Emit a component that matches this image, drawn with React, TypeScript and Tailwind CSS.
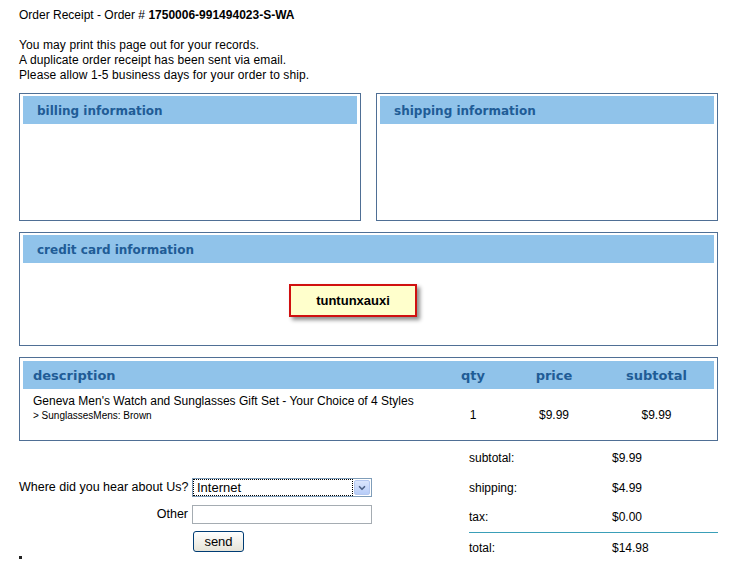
import { ChevronDown } from "lucide-react";

const headerText = "text-[12px] font-bold text-[#1f5c96] font-['DejaVu_Sans',sans-serif]";

function Panel({ title, className, children }: { title: string; className?: string; children?: React.ReactNode }) {
  return (
    <div className={`border border-[#4f6f95] p-[2px_3px_3px_3px] bg-white ${className ?? ""}`}>
      <div className="h-[28px] bg-[#90c3ea] flex items-center pl-[14px] pt-[2px]">
        <span className={headerText}>{title}</span>
      </div>
      {children}
    </div>
  );
}

export default function App() {
  return (
    <div className="min-h-screen bg-white font-['Liberation_Sans',Arial,sans-serif] text-[12px] leading-[15px] text-black">
      <div className="pl-[19px] pt-[8px] w-[718px]">
        {/* Title */}
        <p>
          Order Receipt - Order # <span className="font-bold">1750006-991494023-S-WA</span>
        </p>

        <div className="mt-[15px] tracking-[0.1px]">
          <p>You may print this page out for your records.</p>
          <p>A duplicate order receipt has been sent via email.</p>
          <p>Please allow 1-5 business days for your order to ship.</p>
        </div>

        {/* Billing / shipping */}
        <div className="mt-[10px] flex gap-[15px]">
          <Panel title="billing information" className="w-[342px] h-[128px]" />
          <Panel title="shipping information" className="w-[342px] h-[128px]" />
        </div>

        {/* Credit card */}
        <Panel title="credit card information" className="mt-[11px] h-[114px]">
          <div className="flex justify-center pr-[31px] pt-[21px]">
            <div className="w-[128px] h-[33px] border-2 border-[#d01010] bg-[#ffffcc] shadow-[3px_3px_4px_rgba(0,0,0,0.45)] flex items-center justify-center">
              <span className="font-bold text-[13px]">tuntunxauxi</span>
            </div>
          </div>
        </Panel>

        {/* Items */}
        <div className="mt-[11px] h-[84px] border border-[#4f6f95] p-[3px] bg-white">
          <div className="h-[28px] bg-[#90c3ea] grid grid-cols-[414px_72px_90px_1fr] items-center">
            <span className={`${headerText} pl-[10px] text-[13px]`}>description</span>
            <span className={`${headerText} text-[13px] text-center`}>qty</span>
            <span className={`${headerText} text-[13px] text-center`}>price</span>
            <span className={`${headerText} text-[13px] text-center`}>subtotal</span>
          </div>
          <div className="grid grid-cols-[414px_72px_90px_1fr] items-end pt-[5px]">
            <div className="pl-[10px]">
              <p>Geneva Men's Watch and Sunglasses Gift Set - Your Choice of 4 Styles</p>
              <p className="text-[10px] leading-[13px]">&gt; SunglassesMens: Brown</p>
            </div>
            <span className="text-center leading-[13px]">1</span>
            <span className="text-center leading-[13px]">$9.99</span>
            <span className="text-center leading-[13px]">$9.99</span>
          </div>
        </div>

        {/* Bottom: form + totals */}
        <div className="mt-[2px] flex">
          <div className="w-[450px]">
            <div className="mt-[35px] grid grid-cols-[169px_180px] gap-x-[4px] items-center">
              <span className="text-right text-[12.5px] whitespace-nowrap">Where did you hear about Us?</span>
              <div className="h-[19px] border border-[#7f9db9] flex items-stretch bg-white">
                <div className="flex-1 m-[1px] outline-1 outline-dotted outline-black flex items-center pl-[3px] text-[13px]">
                  Internet
                </div>
                <div className="w-[16px] m-[1px] rounded-[2px] bg-gradient-to-b from-[#dbe6fd] to-[#b8cdf8] border border-[#b5c8f0] flex items-center justify-center">
                  <ChevronDown className="w-[10px] h-[10px] text-[#4d6185]" strokeWidth={4} />
                </div>
              </div>
              <span className="text-right mt-[8px] text-[12.5px]">Other</span>
              <div className="mt-[8px] h-[19px] border border-[#a5acb2] bg-white" />
              <span />
              <div className="mt-[7px]">
                <button className="ml-[1px] w-[51px] h-[21px] border border-[#003c74] rounded-[3px] bg-gradient-to-b from-white to-[#e6e4d8] text-[13px] leading-none">
                  send
                </button>
              </div>
            </div>
            <div className="mt-[4px] w-[3px] h-[3px] bg-[#222]" />
          </div>

          <div className="flex-1">
            <div className="h-[30px] flex items-center">
              <span className="w-[143px]">subtotal:</span>
              <span>$9.99</span>
            </div>
            <div className="h-[30px] flex items-center">
              <span className="w-[143px]">shipping:</span>
              <span>$4.99</span>
            </div>
            <div className="h-[30px] flex items-center border-b border-[#3a9fb8]">
              <span className="w-[143px]">tax:</span>
              <span>$0.00</span>
            </div>
            <div className="h-[30px] flex items-center">
              <span className="w-[143px]">total:</span>
              <span>$14.98</span>
            </div>
          </div>
        </div>
      </div>
    </div>
  );
}
